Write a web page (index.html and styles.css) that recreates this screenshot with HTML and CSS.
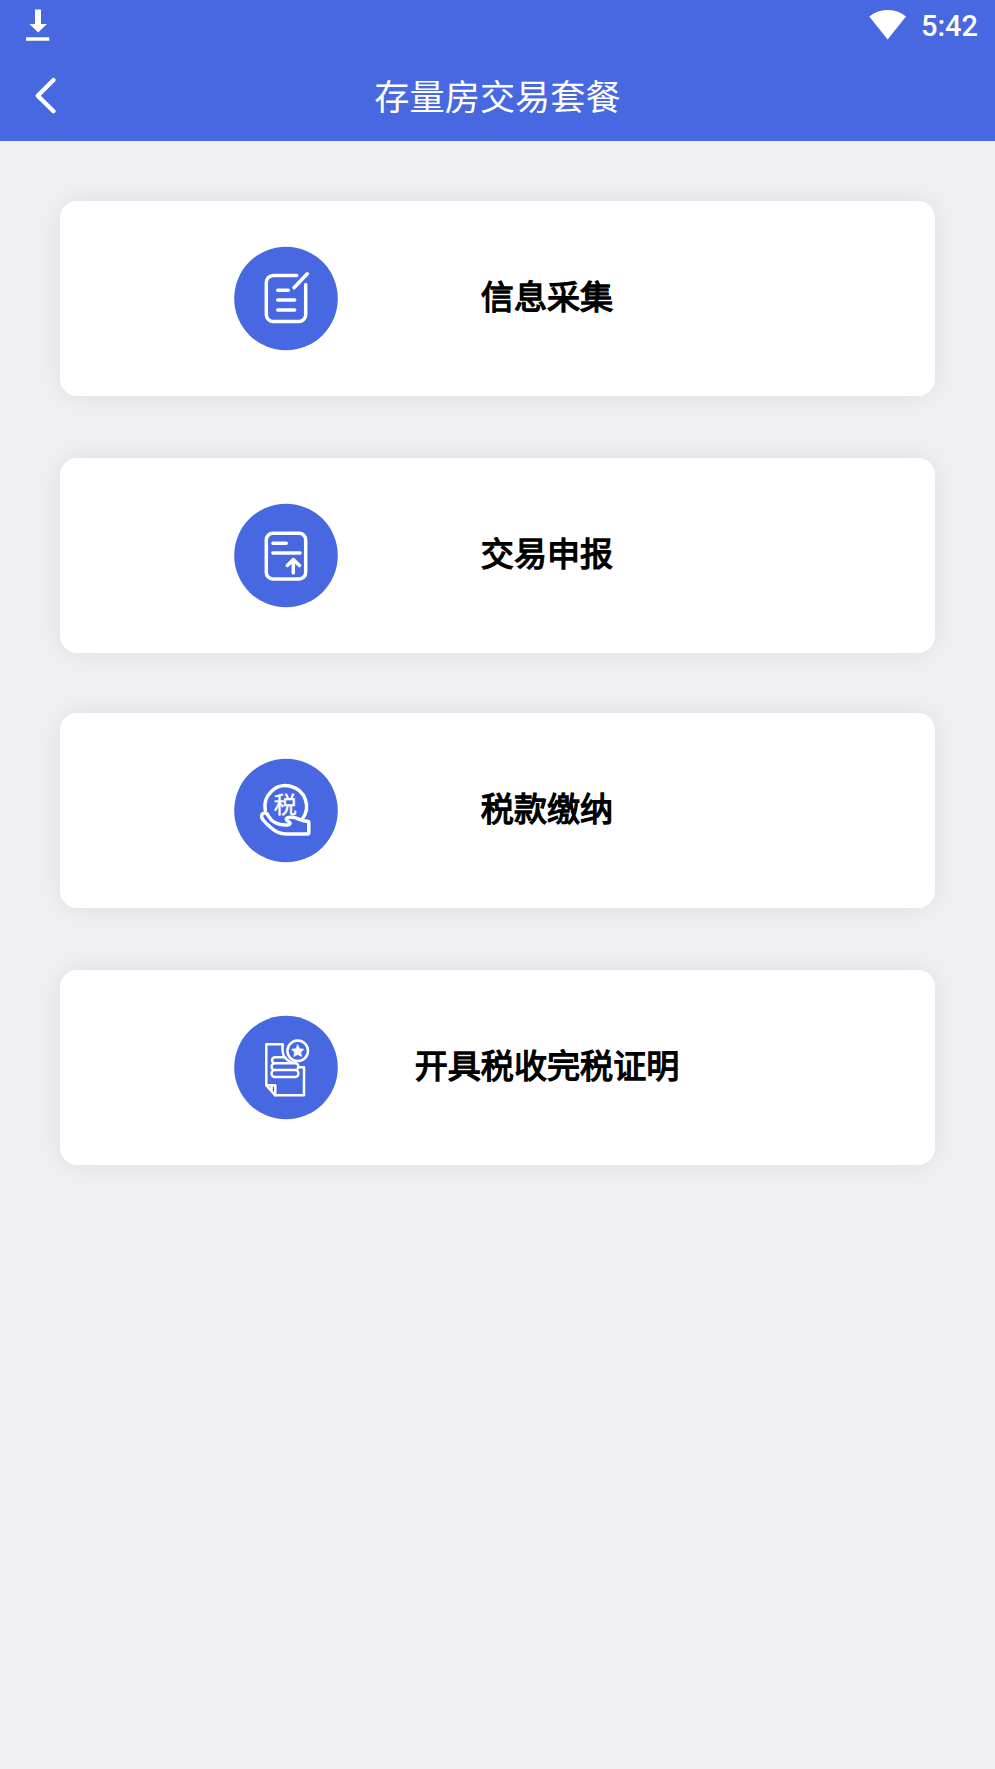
FILE: index.html
```
<!DOCTYPE html>
<html lang="zh-CN">
<head>
    <meta charset="UTF-8">
    <meta name="viewport" content="width=device-width, initial-scale=1.0">
    <title>存量房交易套餐</title>
    <link rel="stylesheet" href="styles.css">
</head>
<body>
    <header class="header">
        <div class="status-bar">
            <svg class="download-icon" width="24" height="32" viewBox="0 0 24 32">
                <path d="M9 0.500h6v14.500h6L12.200 23.500 3.500 15H9zM0 28.300h23.300v3.500H0z"/>
            </svg>
            <div class="status-right">
                <svg class="wifi-icon" width="38" height="30" viewBox="0 0 38 30">
                    <path d="M0.300 6.500C11-2.200 26.500-2.200 37 6.500L18.600 29.500z"/>
                </svg>
                <span class="time">5:42</span>
            </div>
        </div>
        <div class="nav-bar">
            <button class="back-button" aria-label="返回">
                <svg width="24" height="40" viewBox="0 0 24 40">
                    <path d="M20.500 4L4.700 19.700 20.500 35.200"/>
                </svg>
            </button>
            <h1>存量房交易套餐</h1>
        </div>
    </header>

    <main class="menu">
        <a class="card">
            <svg class="card-icon" viewBox="0 0.5 104 104">
                <circle class="icon-bg" cx="52" cy="52" r="51.8"/>
                <path d="M62.700 29H39.300a7 7 0 0 0-7 7v32a7 7 0 0 0 7 7h25.400a7 7 0 0 0 7-7V38"/>
                <path d="M60 41.300L73.300 27.300M43.700 43.700h10.600M43.700 53.600h17M43.700 63.400h17"/>
            </svg>
            <span class="card-title">信息采集</span>
        </a>
        <a class="card">
            <svg class="card-icon" viewBox="0 0.5 104 104">
                <circle class="icon-bg" cx="52" cy="52" r="51.8"/>
                <rect x="32.300" y="29.800" width="39.400" height="45.700" rx="6.500"/>
                <path d="M38.900 39.700h13.300M38.900 49.500h27.100M59.300 69.500V56M53.300 62l6-6 6.200 6"/>
            </svg>
            <span class="card-title">交易申报</span>
        </a>
        <a class="card">
            <svg class="card-icon" viewBox="0 0.5 104 104">
                <circle class="icon-bg" cx="52" cy="52" r="51.8"/>
                <path d="M31.300 51.800A20.800 20.800 0 1 1 68.300 60.500"/>
                <path d="M34.300 57.300C32.500 52.800 27 54.300 27.700 58.500C28.300 62 33 65.500 36.500 68.800C41 73 45 75.500 52 75.500H73.500Q74.800 75.500 74.800 74V64.500Q74.800 62.800 73 62.800C67 62.800 64.500 59.200 58.500 58.700C54.500 58.400 52 59 52.500 61.300C52.900 63 55.500 63 56 64.300C56.300 66 54 66.700 51.500 66.600C43 66.300 37 62.500 34.300 57.300z"/>
                <text class="icon-text" x="51.300" y="54.500">税</text>
            </svg>
            <span class="card-title">税款缴纳</span>
        </a>
        <a class="card">
            <svg class="card-icon thin" viewBox="0 0.5 104 104">
                <circle class="icon-bg" cx="52" cy="52" r="51.8"/>
                <!-- sheet with folded corner -->
                <path d="M50.500 41.500C48.700 39 48.200 34 48.700 28.800H32.300V69.800L41 79.800H70V51.700H64"/>
                <path d="M32.300 69.800H41.300V79.800M37.500 70V74.500"/>
                <!-- ribbon lines -->
                <path d="M51 41.800H41a2.900 2.900 0 0 0 0 5.900H60.500C56 46.700 53 45 51 41.800M41 47.700a3.400 3.400 0 0 0 0 6.900H61a3.400 3.400 0 0 0 0-6.900M41 54.600a3.500 3.500 0 0 0 0 7H61a3.500 3.500 0 0 0 0-7"/>
                <circle cx="63.700" cy="35.300" r="10.300"/>
                <path class="star" d="M63.700 29.300l1.900 3.900 4.200.6-3 3 .7 4.200-3.800-2-3.800 2 .7-4.200-3-3 4.200-.6z"/>
            </svg>
            <span class="card-title">开具税收完税证明</span>
        </a>
    </main>
</body>
</html>
```
FILE: styles.css
```
* {
    margin: 0;
    padding: 0;
    box-sizing: border-box;
}

body {
    min-height: 100vh;
    background-color: #efeff4;
    font-family: "Noto Sans CJK SC", sans-serif;
}

.header {
    height: 141px;
    background-color: #4768e0;
    color: #fff;
}

.status-bar {
    height: 50px;
    padding: 9px 17px 0 26px;
    display: flex;
    justify-content: space-between;
    align-items: flex-start;
    fill: #fff;
}

.status-right {
    display: flex;
    gap: 14px;
}

.wifi-icon {
    margin-top: 1px;
}

.time {
    font-family: Roboto, sans-serif;
    font-size: 29px;
    font-weight: 500;
    line-height: 34px;
}

.nav-bar {
    height: 91px;
    padding: 0 33px;
    display: grid;
    grid-template-columns: 24px 1fr 24px;
    align-items: center;
}

.back-button {
    display: flex;
    background: none;
    border: none;
    cursor: pointer;
}

.back-button svg {
    fill: none;
    stroke: #fff;
    stroke-width: 4.4;
    stroke-linecap: round;
    stroke-linejoin: round;
}

h1 {
    padding-bottom: 2px;
    font-size: 35.2px;
    font-weight: 400;
    line-height: 52px;
    text-align: center;
}

.menu {
    padding: 60px;
    display: flex;
    flex-direction: column;
}

.card {
    height: 195px;
    margin-bottom: 62px;
    padding-left: 174px;
    display: flex;
    align-items: center;
    background-color: #fff;
    border-radius: 17px;
    box-shadow: 0 0 26px rgba(0, 0, 0, 0.08);
}

.card:nth-child(2) {
    margin-bottom: 60px;
}

.card-icon {
    width: 104px;
    height: 104px;
    flex-shrink: 0;
    overflow: visible;
    fill: none;
    stroke: #fff;
    stroke-width: 3.5;
    stroke-linecap: round;
    stroke-linejoin: round;
}

.card-icon.thin {
    stroke-width: 2.5;
}

.icon-bg {
    fill: #4768e0;
    stroke: none;
}

.icon-text {
    fill: #fff;
    stroke-width: 0.4;
    font-size: 23px;
    text-anchor: middle;
}

.star {
    fill: #fff;
    stroke-width: 0.7;
}

.card-title {
    width: 418px;
    padding-bottom: 8px;
    color: #000;
    font-size: 33.1px;
    font-weight: 400;
    line-height: 48px;
    text-align: center;
    -webkit-text-stroke: 1.3px #000;
}
```
